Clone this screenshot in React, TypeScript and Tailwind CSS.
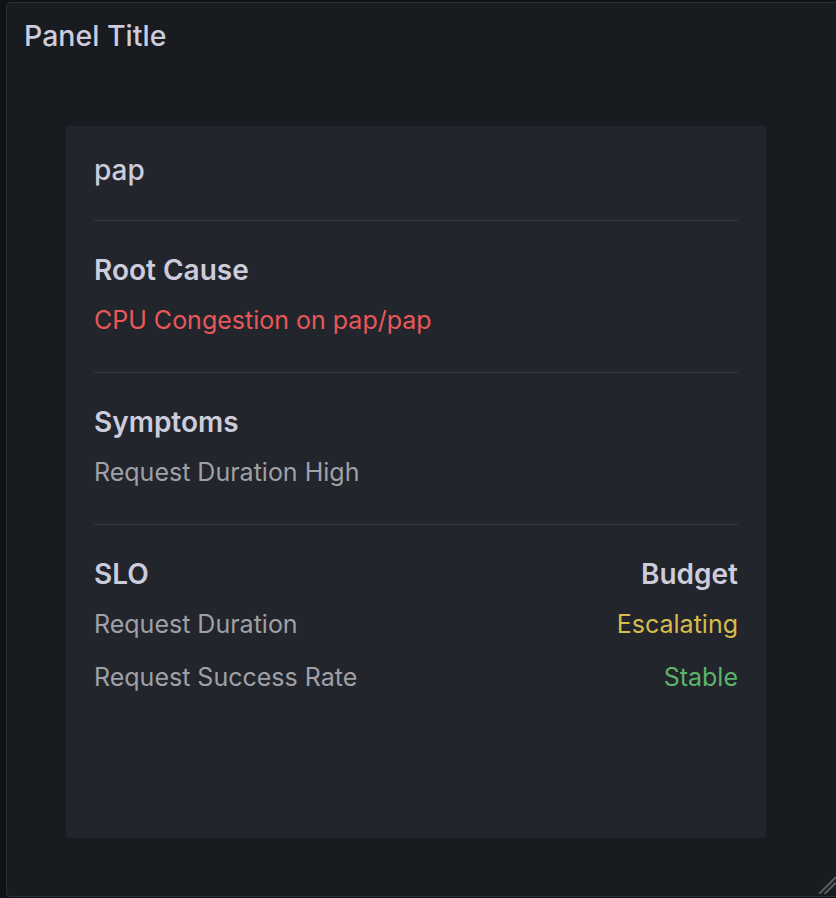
import React from 'react';

const slos = [
  { name: 'Request Duration', status: 'Escalating', color: 'text-[#d6bc4c]' },
  { name: 'Request Success Rate', status: 'Stable', color: 'text-[#5ab46c]' },
];

export default function App() {
  return (
    <div className="relative w-[836px] h-[898px] overflow-hidden bg-[#111217] pl-[6px] pt-[2px] font-['Inter',sans-serif]">
      <div className="w-[834px] h-[895px] rounded-[4px] border border-[#2d2f36] bg-[#181b1f] flex flex-col">
        {/* Header */}
        <div className="h-[66px] px-[17px] flex items-center text-[28.5px] font-medium text-[#ccccdc]">
          Panel Title
        </div>

        {/* Card */}
        <div className="ml-[59px] mt-[57px] w-[700px] h-[712px] bg-[#22252b] px-[28px] pt-[24px]">
          <div className="text-[28px] leading-[40px] font-medium text-[#ccccdc] pb-[30px]">pap</div>

          <div className="h-px bg-[#37393f]" />
          <div className="pt-[29px] pb-[32px]">
            <div className="text-[28px] leading-[40px] font-semibold text-[#ccccdc]">Root Cause</div>
            <div className="mt-[10px] text-[25px] leading-[40px] text-[#e8585a]">CPU Congestion on pap/pap</div>
          </div>

          <div className="h-px bg-[#37393f]" />
          <div className="pt-[29px] pb-[32px]">
            <div className="text-[28px] leading-[40px] font-semibold text-[#ccccdc]">Symptoms</div>
            <div className="mt-[10px] text-[25px] leading-[40px] text-[#9fa0a8]">Request Duration High</div>
          </div>

          <div className="h-px bg-[#37393f]" />
          <div className="pt-[29px]">
            <div className="flex justify-between text-[28px] leading-[40px] font-semibold text-[#ccccdc]">
              <span>SLO</span>
              <span>Budget</span>
            </div>
            <div className="mt-[10px] flex flex-col gap-[13px]">
              {slos.map((s) => (
                <div key={s.name} className="flex justify-between text-[25px] leading-[40px]">
                  <span className="text-[#9fa0a8]">{s.name}</span>
                  <span className={s.color}>{s.status}</span>
                </div>
              ))}
            </div>
          </div>
        </div>
      </div>

      {/* Resize handle */}
      <svg className="absolute left-[816px] top-[874px]" width="20" height="20" viewBox="0 0 20 20">
        <line x1="3" y1="20" x2="20" y2="3" stroke="#5c5d64" strokeWidth="2" />
        <line x1="8.5" y1="20" x2="20" y2="8.5" stroke="#5c5d64" strokeWidth="2" />
      </svg>
    </div>
  );
}
